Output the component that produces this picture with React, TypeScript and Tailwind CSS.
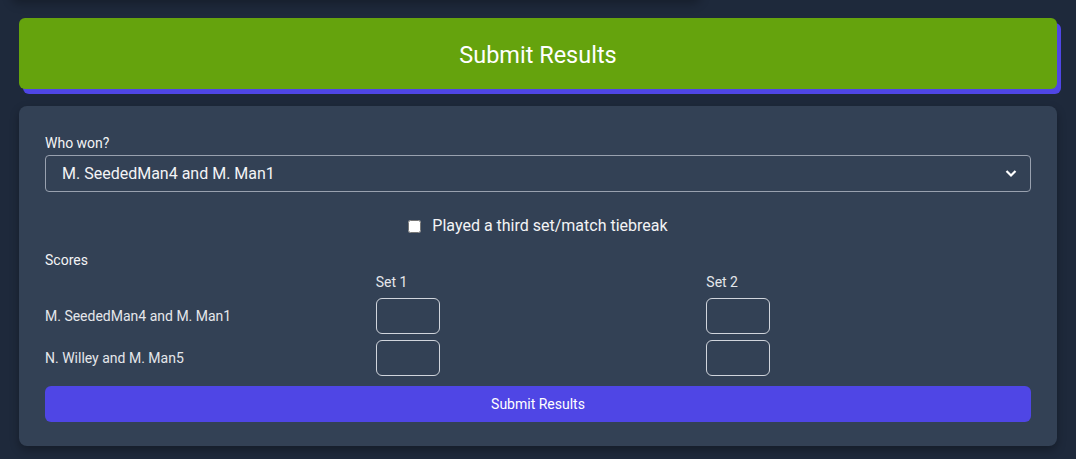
import { useState } from 'react'

const teams = ['M. SeededMan4 and M. Man1', 'N. Willey and M. Man5']
const sets = ['Set 1', 'Set 2']

const App = () => {
  const [winner, setWinner] = useState(teams[0])
  const [thirdSet, setThirdSet] = useState(false)

  return (
    <div
      className="h-[459px] overflow-hidden bg-[#1e293b] px-[19px]"
      style={{ fontFamily: 'Roboto, "Liberation Sans", sans-serif' }}
    >
      {/* card above, scrolled out of view */}
      <div className="-mt-[40px] mb-[18px] ml-[-8px] h-[40px] w-[690px] rounded-lg bg-[#1e293b] shadow-[0_4px_10px_rgba(0,0,0,0.25)]" />

      <button className="flex h-[71px] w-full items-center justify-center rounded-md bg-[#65a30d] pt-[5px] text-[23.5px] text-white shadow-[4px_5px_0_0_#4f46e5]">
        Submit Results
      </button>

      <div className="mt-[17px] rounded-lg bg-[#334155] px-[26px] pt-[27px] pb-[24px] shadow-[0_4px_10px_rgba(0,0,0,0.3)]">
        <label className="block text-sm leading-5 text-gray-100">Who won?</label>
        <div className="relative mt-[2px]">
          <select
            value={winner}
            onChange={(e) => setWinner(e.target.value)}
            className="h-[37px] w-full appearance-none rounded border border-gray-400 bg-[#334155] pl-4 text-base text-gray-100"
          >
            {teams.map((t) => (
              <option key={t}>{t}</option>
            ))}
          </select>
          <svg
            className="pointer-events-none absolute right-[14px] top-[14px]"
            width="12"
            height="9"
            viewBox="0 0 12 9"
          >
            <polyline points="1.5,2 6,6.5 10.5,2" fill="none" stroke="white" strokeWidth="2.2" />
          </svg>
        </div>

        <div className="mt-[22px] flex items-center justify-center gap-[11px]">
          <input
            type="checkbox"
            checked={thirdSet}
            onChange={() => setThirdSet(!thirdSet)}
            className="h-[13px] w-[13px]"
          />
          <span className="text-base leading-6 text-gray-100">Played a third set/match tiebreak</span>
        </div>

        <div className="mt-[12px] text-sm leading-5 text-gray-100">Scores</div>

        <div className="mt-[2px] grid grid-cols-3 items-center gap-x-1.5">
          <div />
          {sets.map((s) => (
            <div key={s} className="text-sm leading-5 text-gray-200">
              {s}
            </div>
          ))}
        </div>

        {teams.map((t) => (
          <div key={t} className="mt-[6px] grid grid-cols-3 items-center gap-x-1.5">
            <div className="text-sm text-gray-200">{t}</div>
            {sets.map((s) => (
              <div key={s}>
                <input
                  type="text"
                  className="h-9 w-16 rounded-md border border-gray-300 bg-transparent text-center text-gray-100"
                />
              </div>
            ))}
          </div>
        ))}

        <button className="mt-[10px] h-9 w-full rounded-md bg-[#4f46e5] text-sm text-white">
          Submit Results
        </button>
      </div>
    </div>
  )
}

export default App
